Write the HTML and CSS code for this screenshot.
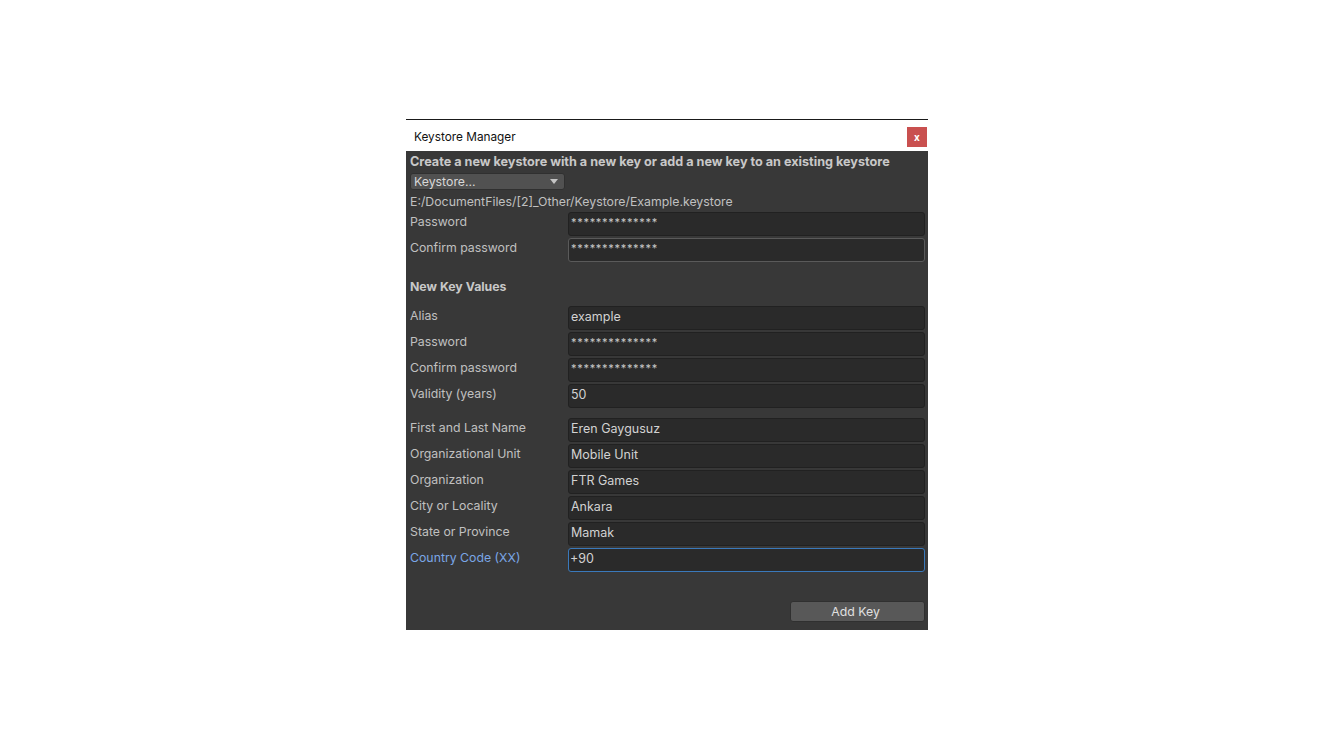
FILE: index.html
```html
<!DOCTYPE html>
<html>
<head>
<meta charset="utf-8">
<link rel="stylesheet" href="styles.css">
</head>
<body>
<div class="window">
  <div class="titlebar">
    <span class="title">Keystore Manager</span>
    <span class="close">x</span>
  </div>
  <div class="content">
    <div class="intro">Create a new keystore with a new key or add a new key to an existing keystore</div>
    <div class="dropdown"><span>Keystore...</span><span class="arrow"></span></div>
    <div class="path">E:/DocumentFiles/[2]_Other/Keystore/Example.keystore</div>
    <div class="row"><div class="label">Password</div><div class="field pw">**************</div></div>
    <div class="row"><div class="label">Confirm password</div><div class="field pw hover">**************</div></div>

    <div class="section">New Key Values</div>
    <div class="row"><div class="label">Alias</div><div class="field">example</div></div>
    <div class="row"><div class="label">Password</div><div class="field pw">**************</div></div>
    <div class="row"><div class="label">Confirm password</div><div class="field pw">**************</div></div>
    <div class="row"><div class="label">Validity (years)</div><div class="field">50</div></div>

    <div class="group">
      <div class="row"><div class="label">First and Last Name</div><div class="field">Eren Gaygusuz</div></div>
      <div class="row"><div class="label">Organizational Unit</div><div class="field">Mobile Unit</div></div>
      <div class="row"><div class="label">Organization</div><div class="field">FTR Games</div></div>
      <div class="row"><div class="label">City or Locality</div><div class="field">Ankara</div></div>
      <div class="row"><div class="label">State or Province</div><div class="field">Mamak</div></div>
      <div class="row"><div class="label focus">Country Code (XX)</div><div class="field focused">+90</div></div>
    </div>

    <div class="actions"><div class="button">Add Key</div></div>
  </div>
</div>
</body>
</html>
```

FILE: styles.css
```css
* { box-sizing: border-box; }
html, body { margin: 0; padding: 0; background: #ffffff; }
body {
  font-family: Inter, "Noto Sans", sans-serif;
  font-size: 12.3px;
}
.window {
  margin: 119px 0 0 406px;
  width: 522px;
  border-top: 1px solid #1a1a1a;
}
.titlebar {
  height: 31px;
  background: #ffffff;
  display: flex;
  align-items: center;
  justify-content: space-between;
  padding: 0 1px 0 8px;
}
.title {
  color: #111111;
  font-size: 11.8px;
  margin-top: 2px;
}
.close {
  width: 20px;
  height: 20px;
  background: #c9504f;
  color: #ffffff;
  font-size: 10px;
  font-weight: bold;
  display: flex;
  align-items: center;
  justify-content: center;
  margin-top: 2px;
}
.content {
  background: #383838;
  height: 479px;
  padding: 1px 3px 0 4px;
  color: #c0c0c0;
}
.intro {
  font-weight: bold;
  font-size: 12.65px;
  line-height: 18px;
  height: 18px;
  padding-top: 1px;
  white-space: nowrap;
  color: #c8c8c8;
}
.dropdown {
  margin-top: 3px;
  width: 155px;
  height: 17px;
  background: #515151;
  border: 1px solid #303030;
  border-radius: 3px;
  display: flex;
  align-items: center;
  justify-content: space-between;
  padding: 0 6px 0 3px;
  color: #d8d8d8;
}
.arrow {
  width: 0;
  height: 0;
  border-left: 4px solid transparent;
  border-right: 4px solid transparent;
  border-top: 5px solid #c4c4c4;
}
.path {
  margin-top: 2px;
  line-height: 18px;
  height: 18px;
  padding-top: 1px;
}
.row {
  display: grid;
  grid-template-columns: 158px 357px;
  margin-top: 2px;
  height: 24px;
}
.label {
  line-height: 18px;
  padding-top: 1px;
  white-space: nowrap;
}
.label.focus { color: #7aa6e6; }
.field {
  background: #2a2a2a;
  border: 1px solid #212121;
  border-radius: 3px;
  padding: 0 2px;
  line-height: 20px;
  font-size: 12.5px;
  color: #d2d2d2;
  white-space: nowrap;
}
.field.pw {
  font-size: 11px;
  letter-spacing: 0.7px;
  line-height: 19px;
  color: #c8c8c8;
}
.field.hover { border-color: #5a5a5a; }
.field.focused { border-color: #3a79bb; padding-left: 1px; }
.section {
  margin-top: 15px;
  margin-bottom: 11px;
  line-height: 18px;
  padding-top: 1px;
  height: 18px;
  font-weight: bold;
  color: #c8c8c8;
}
.group { margin-top: 10px; }
.actions {
  display: flex;
  justify-content: flex-end;
  margin-top: 29px;
}
.button {
  width: 135px;
  height: 21px;
  background: #585858;
  border: 1px solid #303030;
  border-radius: 3px;
  color: #e0e0e0;
  text-align: center;
  line-height: 19px;
  padding-right: 4px;
}
```
